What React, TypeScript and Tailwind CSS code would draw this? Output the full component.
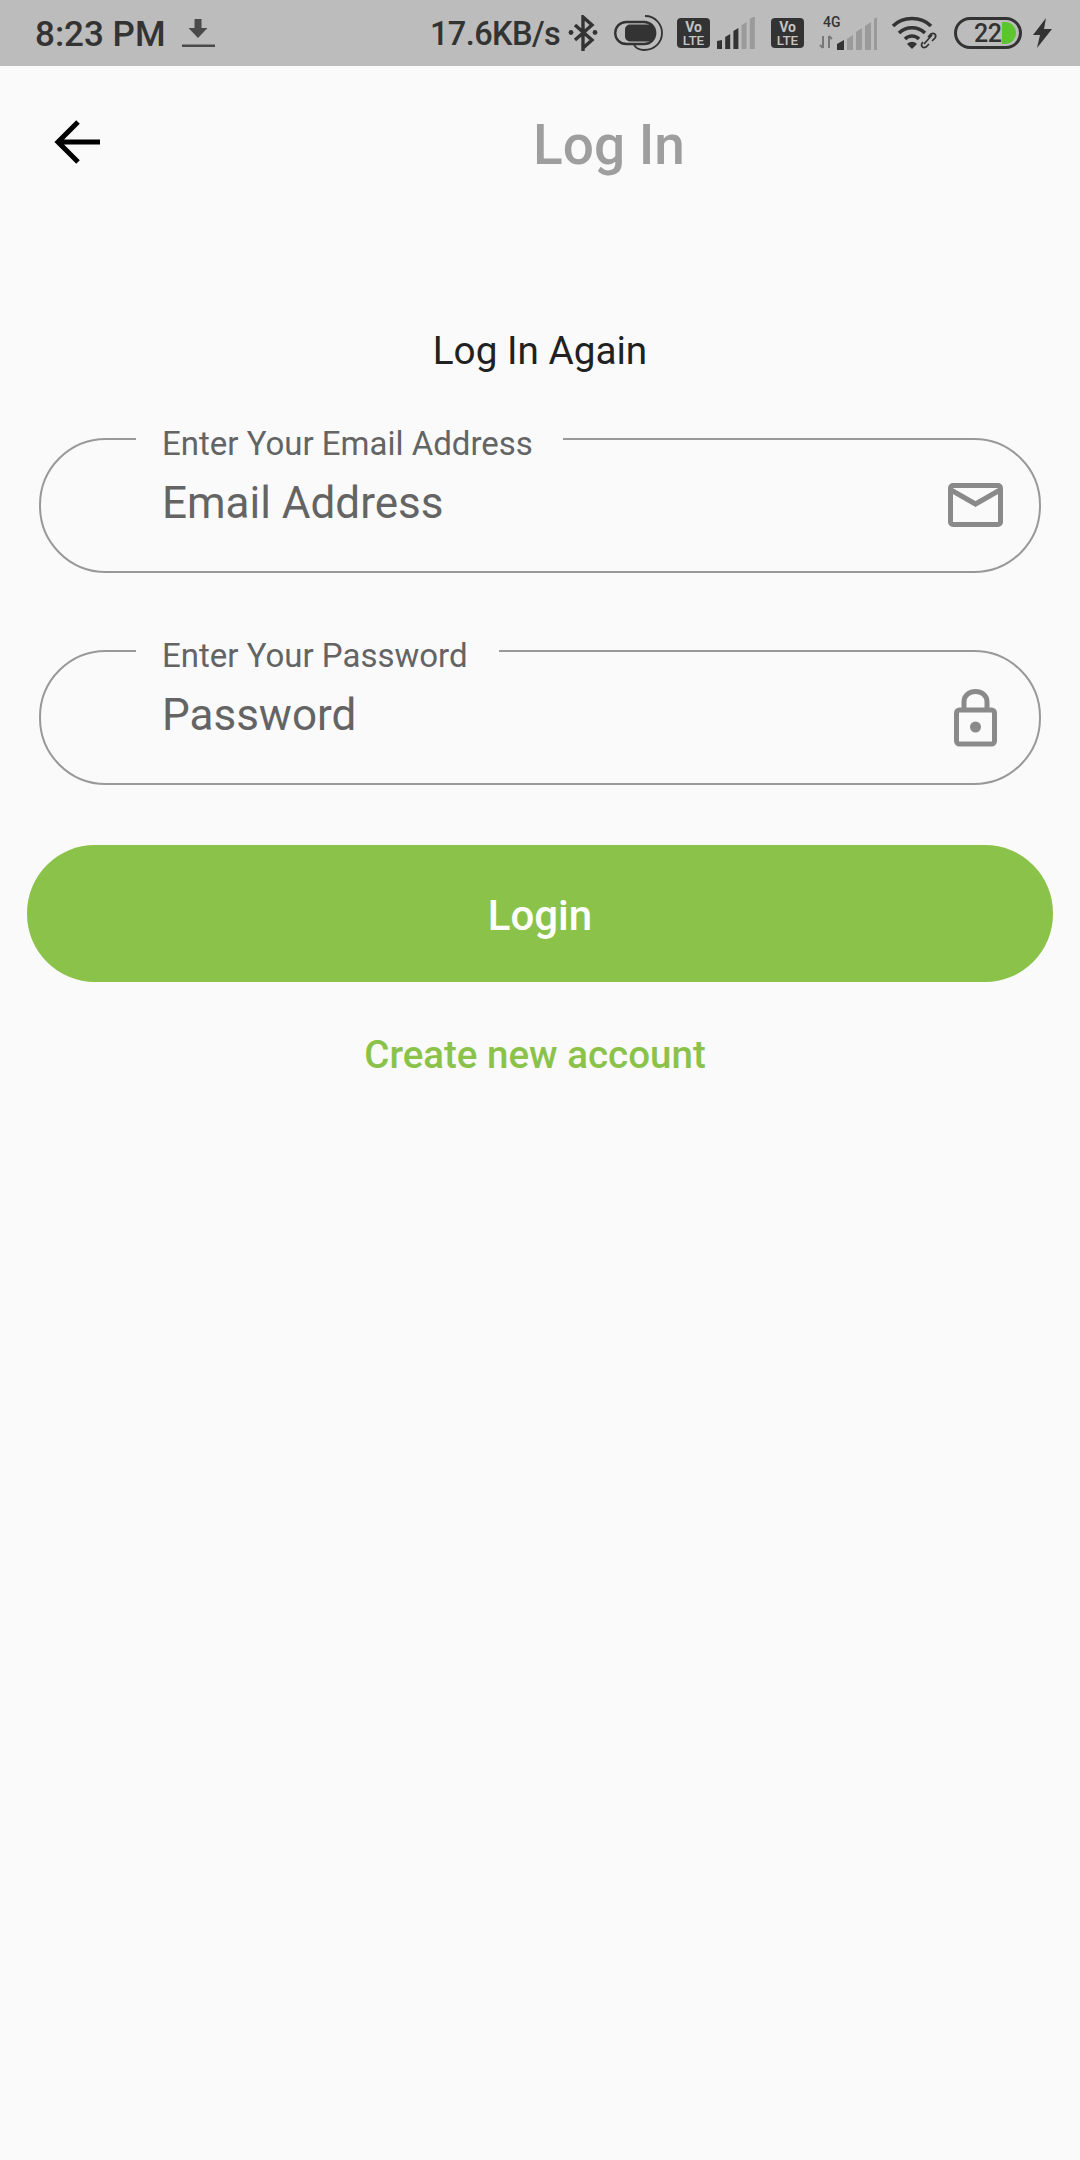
import React from 'react';

const Volte = () => (
  <svg width="33" height="30" viewBox="0 0 33 30">
    <rect width="33" height="30" rx="4" fill="#333" />
    <text x="16.5" y="13.5" textAnchor="middle" fontSize="14" fontWeight="700" fontFamily="Roboto, sans-serif" fill="#c4c4c4">Vo</text>
    <text x="16.5" y="27" textAnchor="middle" fontSize="13.5" fontWeight="500" fontFamily="Roboto, sans-serif" fill="#c4c4c4">LTE</text>
  </svg>
);

const Bars = ({ strong }: { strong: number }) => (
  <svg width="40" height="32" viewBox="0 0 40 32">
    {[0, 1, 2, 3, 4].map((i) => {
      const h = 8 + i * 6;
      return <path key={i} d={`M${i * 8.2} 32 V${32 - h + (i === 0 ? 0 : 2)} L${i * 8.2 + 5} ${32 - h - 1} V32 Z`} fill={i < strong ? '#333' : '#9a9a9a'} />;
    })}
  </svg>
);

const StatusBar = () => (
  <div className="h-[66px] bg-[#bcbcbc] flex items-center pl-[35px] text-[#333] font-medium">
    <span className="text-[35px] leading-none w-[147px] mt-[2px] whitespace-nowrap">8:23 PM</span>
    <svg width="33" height="28" viewBox="0 0 33 28">
      <path d="M12.5 0 h7 v9 h6 l-9.5 10 l-9.5 -10 h6 z" fill="#4a4a4a" />
      <rect y="25.5" width="33" height="2.5" fill="#4a4a4a" />
    </svg>
    <span className="text-[32.5px] leading-none w-[138px] ml-[215px] mt-[2px] tracking-[-0.6px] whitespace-nowrap">17.6KB/s</span>
    <svg width="30" height="36" viewBox="0 0 30 36" fill="none" stroke="#333" strokeWidth="3.4">
      <path d="M15 36 V2 L24 10 L7 25 M7 10 L24 25 L15 33" />
      <circle cx="3" cy="17.5" r="2.4" fill="#333" stroke="none" />
      <circle cx="27" cy="17.5" r="2.4" fill="#333" stroke="none" />
    </svg>
    <svg className="ml-[16px]" width="49" height="36" viewBox="0 0 49 36" fill="none" stroke="#333" strokeWidth="2.4">
      <rect x="1.2" y="7" width="40" height="22" rx="11" />
      <rect x="11" y="9.5" width="29" height="17" rx="5" fill="#333" stroke="none" />
      <path d="M31 1 C42 1 48 10 48 18 C48 27 41 35 30 35 C25 35 22 33 20 30" strokeWidth="1.8" />
    </svg>
    <span className="ml-[14px] flex"><Volte /></span>
    <span className="ml-[7px] flex"><Bars strong={3} /></span>
    <span className="ml-[14px] flex"><Volte /></span>
    <svg className="ml-[14px]" width="59" height="40" viewBox="0 -3 59 40">
      <text x="5" y="11" fontSize="14" fontWeight="500" fontFamily="Roboto, sans-serif" fill="#333">4G</text>
      <path d="M5 20 V32 M2 29 L5 32 M11 32 V20 M11 20 L14 23" stroke="#777" strokeWidth="2" fill="none" />
      <path d="M19 34 V28 L26 24 V34 Z" fill="#333" />
      <path d="M29 34 V23 L35 19 V34 Z M38 34 V16 L44 12 V34 Z M47 34 V10 L53 6 V34 Z" fill="#9a9a9a" />
      <path d="M56 34 V3 L59 1 V34 Z" fill="#9a9a9a" />
    </svg>
    <svg className="ml-[14px]" width="47" height="34" viewBox="0 0 47 34" fill="none">
      <path d="M2 10 C12 0 30 0 40 10 M8 17 C15 10 27 10 34 17 M14 23 C18 19 24 19 28 23" stroke="#333" strokeWidth="3.6" />
      <path d="M16 28 L21 33 L26 28 C23 25 19 25 16 28 Z" fill="#333" />
      <path d="M33 28 L41 19 M32 26 C29 29 31 33 35 31 L38 28 M37 21 L40 18 C43 16 46 19 44 22 L41 25" stroke="#333" strokeWidth="1.7" />
    </svg>
    <div className="ml-[16px] relative w-[68px] h-[32px] rounded-full border-[3px] border-[#333] flex items-center overflow-hidden">
      <span className="ml-[17px] text-[25px] leading-none tracking-[-0.5px]">22</span>
      <span className="absolute left-[45px] top-[2px] w-[14px] h-[22px] rounded-r-full bg-[#5cc52e]" />
    </div>
    <svg className="ml-[11px]" width="19" height="30" viewBox="0 0 19 30">
      <path d="M13 0 L0 17 H7 L4 30 L19 11 H11 Z" fill="#333" />
    </svg>
  </div>
);

const Field = ({ label, gap, value, children }: { label: string; gap: string; value: string; children: React.ReactNode }) => (
  <div className="relative h-[135px] mx-[39px] border-2 border-[#999999] rounded-[67px] flex items-center pl-[121px] pr-[36px]">
    <span className={`absolute left-[95px] -top-[15px] ${gap} pl-[26px] bg-[#fafafa] text-[33px] leading-[38px] text-[#646464] whitespace-nowrap`}>{label}</span>
    <span className="flex-1 text-[44px] leading-[50px] text-[#646464] mb-[6px]">{value}</span>
    {children}
  </div>
);

export default function App() {
  return (
    <div className="w-[1080px] h-[2160px] bg-[#fafafa] font-['Roboto',sans-serif]">
      <StatusBar />

      <div className="h-[80px] mt-[36px] flex items-center pl-[54px]">
        <svg width="46" height="44" viewBox="0 0 46 44" fill="none" stroke="#000" strokeWidth="5">
          <path d="M46 22 H4 M24 2 L4 22 L24 42" />
        </svg>
        <h1 className="flex-1 text-center text-[55px] leading-[60px] font-medium text-[#9e9e9e] ml-[38px] mt-[5px]">Log In</h1>
      </div>

      <p className="mt-[146px] text-center text-[38.7px] leading-[46px] text-[#212121]">Log In Again</p>

      <div className="mt-[64px] flex flex-col gap-[77px]">
        <Field label="Enter Your Email Address" gap="w-[427px]" value="Email Address">
          <svg className="mb-[2px]" width="55" height="44" viewBox="0 0 55 44" fill="none" stroke="#8a8a8a" strokeWidth="5">
            <rect x="2.5" y="2.5" width="50" height="39" rx="2.5" />
            <path d="M3 7 L27.5 21 L52 7" />
          </svg>
        </Field>
        <Field label="Enter Your Password" gap="w-[363px]" value="Password">
          <svg className="mx-[6px]" width="43" height="58" viewBox="0 0 43 58" fill="none" stroke="#8a8a8a" strokeWidth="5">
            <rect x="2.5" y="21" width="38" height="34" rx="3" />
            <path d="M10 21 V13 C10 -1 33 -1 33 13 V21" />
            <circle cx="21.5" cy="38" r="5.5" fill="#8a8a8a" stroke="none" />
          </svg>
        </Field>
      </div>

      <button className="block mt-[60px] mx-[27px] w-[1026px] h-[137px] rounded-[68px] bg-[#8bc34a] text-white text-[42px] font-medium leading-none pt-[4px]">
        Login
      </button>

      <p className="mt-[51px] text-center text-[38.5px] leading-[44px] font-medium text-[#8bc34a] pr-[10px]">Create new account</p>
    </div>
  );
}
